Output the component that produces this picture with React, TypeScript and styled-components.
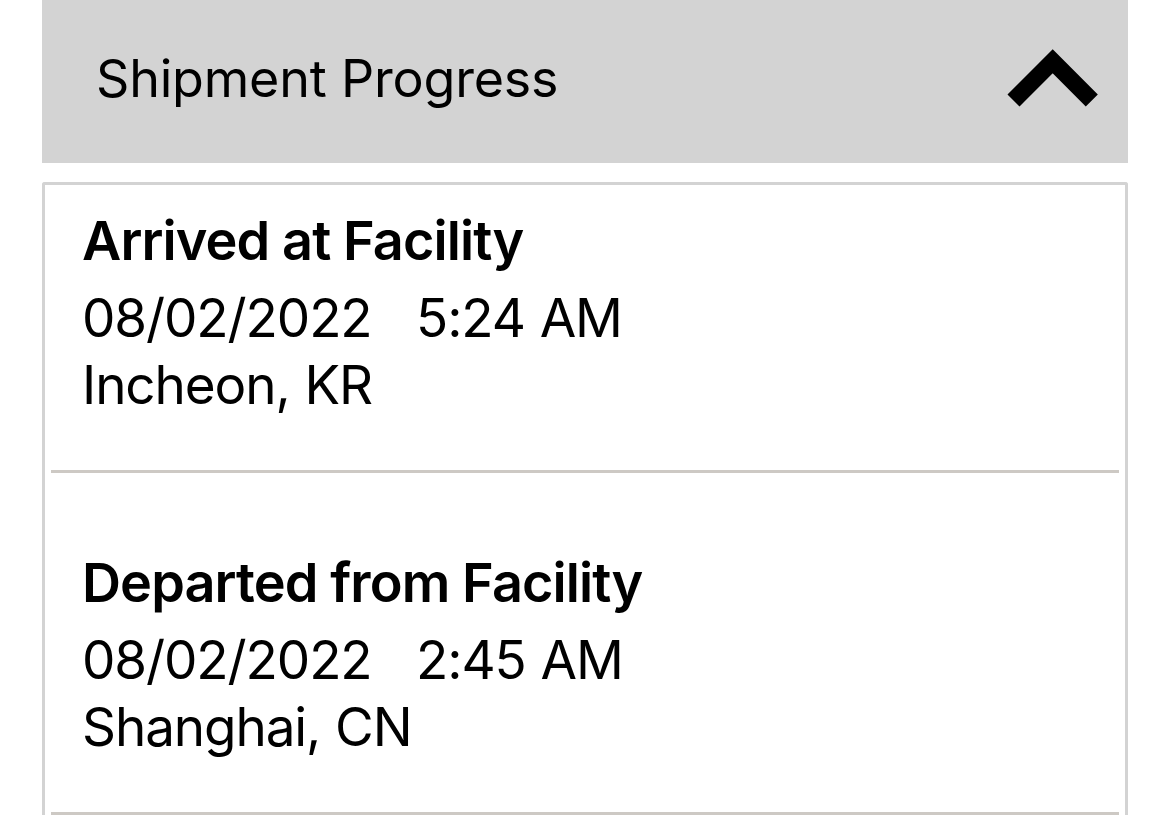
import styled, { createGlobalStyle } from 'styled-components'

const GlobalStyle = createGlobalStyle`
	html, body {
		margin: 0;
		padding: 0;
		background: #fff;
	}
	body {
		font-family: Inter, "Noto Sans", "Liberation Sans", sans-serif;
		color: #000;
		overflow: hidden;
	}
`

const Page = styled.div`
	padding: 0 42px;
`

const Header = styled.div`
	height: 163px;
	background: #d3d3d3;
	display: flex;
	align-items: center;
	justify-content: space-between;
	padding: 0 28px 6px 54px;
	box-sizing: border-box;
`

const HeaderTitle = styled.span`
	font-size: 52px;
	font-weight: 400;
	line-height: 63px;
	letter-spacing: -0.2px;
`

const Chevron = styled.svg`
	width: 94px;
	height: 64px;
	display: block;
`

const Card = styled.div`
	margin-top: 19px;
	border: 3px solid #d3d3d3;
	border-bottom: none;
	border-radius: 3px 3px 0 0;
	padding: 0 6px;
`

const Event = styled.div<{ first?: boolean }>`
	padding: ${props => props.first ? '22px' : '76px'} 0 51px 31px;
	border-bottom: 3px solid #cdc9c4;
`

const Title = styled.div`
	font-size: 54px;
	font-weight: 600;
	line-height: 67px;
	letter-spacing: -0.9px;
	margin-bottom: 11px;
`

const Line = styled.div`
	font-size: 53px;
	font-weight: 400;
	line-height: 67px;
	letter-spacing: -1.1px;
	word-spacing: 1px;
	white-space: pre;
`

const events = [
	{ title: 'Arrived at Facility', date: '08/02/2022', time: '5:24 AM', place: 'Incheon, KR' },
	{ title: 'Departed from Facility', date: '08/02/2022', time: '2:45 AM', place: 'Shanghai, CN' },
]

export default function App() {
	return (
		<Page>
			<GlobalStyle />
			<Header>
				<HeaderTitle>Shipment Progress</HeaderTitle>
				<Chevron viewBox="0 0 94 64">
					<polyline points="7.5,53.5 46.7,14.3 85.8,53.5" fill="none" stroke="#000" strokeWidth="17" strokeLinejoin="miter" strokeLinecap="butt" />
				</Chevron>
			</Header>
			<Card>
				{events.map((e, i) => (
					<Event key={i} first={i === 0}>
						<Title>{e.title}</Title>
						<Line>{e.date}{'   '}{e.time}</Line>
						<Line>{e.place}</Line>
					</Event>
				))}
			</Card>
		</Page>
	)
}
